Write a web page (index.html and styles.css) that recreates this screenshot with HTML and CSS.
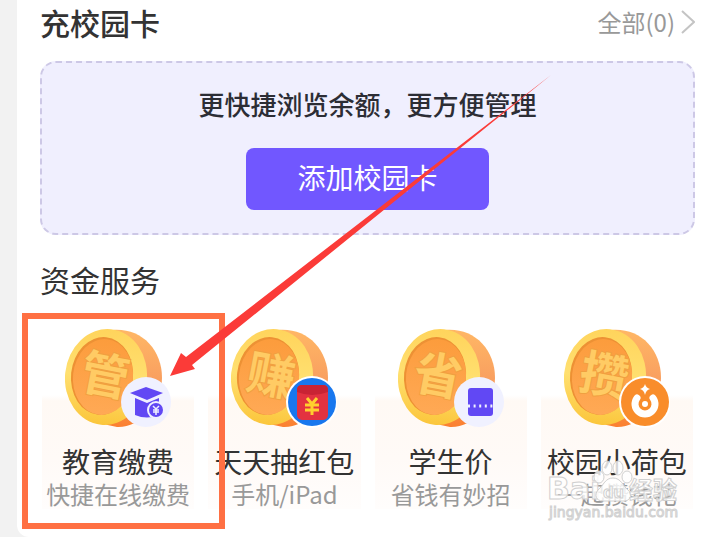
FILE: index.html
```html
<!DOCTYPE html>
<html lang="zh-CN">
<head>
    <meta charset="UTF-8">
    <meta name="viewport" content="width=device-width, initial-scale=1.0">
    <title>校园服务</title>
    <link rel="stylesheet" href="styles.css">
</head>
<body>

    <!-- shared coin body -->
    <svg class="defs" width="0" height="0" aria-hidden="true">
        <defs>
            <linearGradient id="coin-side" x1="0" y1="0" x2="0" y2="1">
                <stop offset="0" stop-color="#ffb765"/>
                <stop offset="0.5" stop-color="#f9a060"/>
                <stop offset="1" stop-color="#fb8030"/>
            </linearGradient>
            <linearGradient id="coin-rim" x1="0" y1="0" x2="0" y2="1">
                <stop offset="0" stop-color="#ffd45c"/>
                <stop offset="0.5" stop-color="#ffe070"/>
                <stop offset="1" stop-color="#fbc63c"/>
            </linearGradient>
            <linearGradient id="coin-face" x1="0" y1="0" x2="0" y2="1">
                <stop offset="0" stop-color="#fc9c3c"/>
                <stop offset="1" stop-color="#ffa955"/>
            </linearGradient>
            <g id="coin">
                <path d="M48 1C76-1 97 20 97 49C97 77 74 99 52 98Q43 97 35 93L42 3Z" fill="url(#coin-side)"/>
                <ellipse cx="41" cy="48" rx="41" ry="48" transform="rotate(6 41 48)" fill="url(#coin-rim)"/>
                <ellipse cx="37" cy="47" rx="31" ry="39" transform="rotate(6 37 47)" fill="#ed9134"/>
                <ellipse cx="38" cy="48" rx="30" ry="38" transform="rotate(6 38 48)" fill="url(#coin-face)"/>
            </g>
        </defs>
    </svg>

    <main class="panel">
        <header class="head">
            <h2 class="head-title">充校园卡</h2>
            <a class="head-all" href="#">全部(0)
                <svg width="14" height="24" viewBox="0 0 14 24"><path d="M1 1L13 12L1 23" fill="none" stroke="#c4c4c4" stroke-width="2"/></svg>
            </a>
        </header>

        <section class="add-card">
            <p class="add-tip">更快捷浏览余额，更方便管理</p>
            <button class="add-btn" type="button">添加校园卡</button>
        </section>

        <h2 class="sub-title">资金服务</h2>

        <div class="services">
            <a class="service" href="#">
                <svg class="coin" viewBox="0 0 106 100">
                    <use href="#coin"/>
                    <text class="coin-char" x="40" y="64" transform="rotate(11 40 48)">管</text>
                    <circle cx="81" cy="73" r="25" fill="#f0f1ff"/>
                    <path d="M65 64L81 58L98 64L82 71Z" fill="#6148f4"/>
                    <path d="M70 69L82 74L94 69V86Q82 91 70 86Z" fill="#6148f4"/>
                    <circle cx="91" cy="81" r="9" fill="#f0f1ff"/>
                    <circle cx="91" cy="81" r="7" fill="#6148f4"/>
                    <path d="M88 77L91 80L94 77M91 80V86M88 81H94M88 83H94" fill="none" stroke="#f0f1ff" stroke-width="1.5"/>
                </svg>
                <span class="service-name">教育缴费</span>
                <span class="service-desc">快捷在线缴费</span>
                <span class="highlight"></span>
            </a>

            <a class="service" href="#">
                <svg class="coin" viewBox="0 0 106 100">
                    <use href="#coin"/>
                    <text class="coin-char" x="40" y="64" transform="rotate(11 40 48)">赚</text>
                    <circle cx="81" cy="73" r="26" fill="#fff"/>
                    <circle cx="81" cy="73" r="24" fill="#1877ee"/>
                    <rect x="66" y="56" width="31" height="35" rx="5" fill="#e33240"/>
                    <path d="M66 63Q81 69 97 63V61Q97 56 92 56H71Q66 56 66 61Z" fill="#c92334"/>
                    <path d="M76 69L81 75L86 69M81 75V86M74 76H88M74 81H88" fill="none" stroke="#ffd02e" stroke-width="3"/>
                </svg>
                <span class="service-name">天天抽红包</span>
                <span class="service-desc">手机/iPad</span>
            </a>

            <a class="service" href="#">
                <svg class="coin" viewBox="0 0 106 100">
                    <use href="#coin"/>
                    <text class="coin-char" x="40" y="64" transform="rotate(11 40 48)">省</text>
                    <circle cx="81" cy="73" r="25" fill="#f0f1ff"/>
                    <rect x="70" y="59" width="25" height="28" rx="3" fill="#6148f4"/>
                    <path d="M70 77H96" stroke="#f0f1ff" stroke-width="3" stroke-dasharray="2 3.6"/>
                </svg>
                <span class="service-name">学生价</span>
                <span class="service-desc">省钱有妙招</span>
            </a>

            <a class="service" href="#">
                <svg class="coin" viewBox="0 0 106 100">
                    <use href="#coin"/>
                    <text class="coin-char" x="40" y="64" transform="rotate(11 40 48)">攒</text>
                    <circle cx="81" cy="73" r="26" fill="#fff"/>
                    <circle cx="81" cy="73" r="24" fill="#f98d2b"/>
                    <path d="M73 69A10 10 0 1 0 89 69" fill="none" stroke="#fff" stroke-width="7" stroke-linecap="round"/>
                    <circle cx="81" cy="75" r="3" fill="#fff"/>
                    <path d="M81 55Q82 59 86 60Q82 61 81 66Q80 61 76 60Q80 59 81 55Z" fill="#fff"/>
                </svg>
                <span class="service-name">校园小荷包</span>
                <span class="service-desc">一起攒钱花</span>
                <svg class="watermark" viewBox="0 0 134 64">
                    <text class="mark-logo" x="0" y="37">Bai</text>
                    <ellipse cx="52" cy="15" rx="5" ry="6"/>
                    <ellipse cx="60" cy="6" rx="5" ry="7"/>
                    <ellipse cx="71" cy="6" rx="5" ry="7"/>
                    <ellipse cx="80" cy="15" rx="5" ry="6"/>
                    <path d="M66 16C74 16 76 24 81 28C87 33 82 40 76 39H56C49 39 47 33 51 28C57 23 58 16 66 16Z"/>
                    <text class="mark-du" x="56" y="36">du</text>
                    <text class="mark-cn" x="82" y="37">经验</text>
                    <text class="mark-url" x="2" y="55">jingyan.baidu.com</text>
                </svg>
            </a>
        </div>

        <svg class="arrow" width="384" height="304" viewBox="0 0 384 304">
            <path d="M381 0L16 282L11 278L0 301L25 294L22 290Z" fill="#fb3b38"/>
        </svg>
    </main>

</body>
</html>
```

FILE: styles.css
```css
* {
    box-sizing: border-box;
}
body {
    margin: 0;
    font-family: "Noto Sans CJK SC", sans-serif;
    color: #333;
    background-color: #f2f2f2;
}
h2, p {
    margin: 0;
}
a {
    color: inherit;
    text-decoration: none;
}
.defs {
    position: absolute;
}
.panel {
    position: relative;
    min-height: 100vh;
    margin-left: 17px;
    padding: 2px 22px 24px 23px;
    background-color: #fff;
    border-bottom-left-radius: 12px;
}
.head {
    display: flex;
    align-items: center;
    justify-content: space-between;
    margin-bottom: 19px;
}
.head-title {
    font-size: 30px;
    font-weight: 500;
    line-height: 40px;
}
.head-all {
    display: flex;
    align-items: center;
    gap: 6px;
    font-size: 24px;
    line-height: 40px;
    color: #999;
}
.add-card {
    display: flex;
    flex-direction: column;
    align-items: center;
    gap: 26px;
    padding: 23px 0;
    border: 2px dashed #cdc8e6;
    border-radius: 16px;
    background-color: #f0effe;
}
.add-tip {
    font-size: 26px;
    font-weight: 500;
    line-height: 36px;
    color: #2c2d35;
}
.add-btn {
    padding: 9px 51px 13px;
    border: 0;
    border-radius: 8px;
    font-family: inherit;
    font-size: 28px;
    line-height: 40px;
    color: #fff;
    background-color: #7157ff;
}
.sub-title {
    margin: 24px 0 30px;
    font-size: 30px;
    font-weight: 400;
    line-height: 40px;
}
.services {
    display: grid;
    grid-template-columns: repeat(4, 1fr);
    gap: 14px;
    margin: 0 2px;
}
.service {
    position: relative;
    display: flex;
    flex-direction: column;
    align-items: center;
    white-space: nowrap;
    background: linear-gradient(transparent 66px, #fff9f4 72px, #fffaf7 130px, #fffdfc);
}
.coin {
    width: 106px;
    height: 100px;
    margin-bottom: 14px;
}
.coin-char {
    font-size: 48px;
    font-weight: 700;
    text-anchor: middle;
    fill: #ffcb64;
    stroke: #f0a040;
    stroke-width: 2;
    paint-order: stroke;
}
.service-name {
    font-size: 28px;
    line-height: 36px;
}
.service-desc {
    font-size: 24px;
    line-height: 30px;
    color: #999;
}

/* marks drawn over the page */
.highlight {
    position: absolute;
    top: -16px;
    right: -31px;
    bottom: -20px;
    left: -20px;
    z-index: 1;
    border: 6px solid #ff7043;
}
.arrow {
    position: absolute;
    top: 75px;
    left: 153px;
    z-index: 2;
    pointer-events: none;
}
.watermark {
    position: absolute;
    right: 12px;
    bottom: -17px;
    width: 134px;
    height: 64px;
    overflow: visible;
    fill: #fff;
    fill-opacity: 0.8;
    stroke: #d0d0d0;
    stroke-width: 1;
}
.mark-logo {
    font: bold 30px "DejaVu Sans", sans-serif;
}
.mark-du {
    font: bold 17px "Liberation Sans", sans-serif;
}
.mark-cn {
    font-size: 24px;
    font-weight: 700;
}
.mark-url {
    font: 14px "DejaVu Sans", sans-serif;
}
```
